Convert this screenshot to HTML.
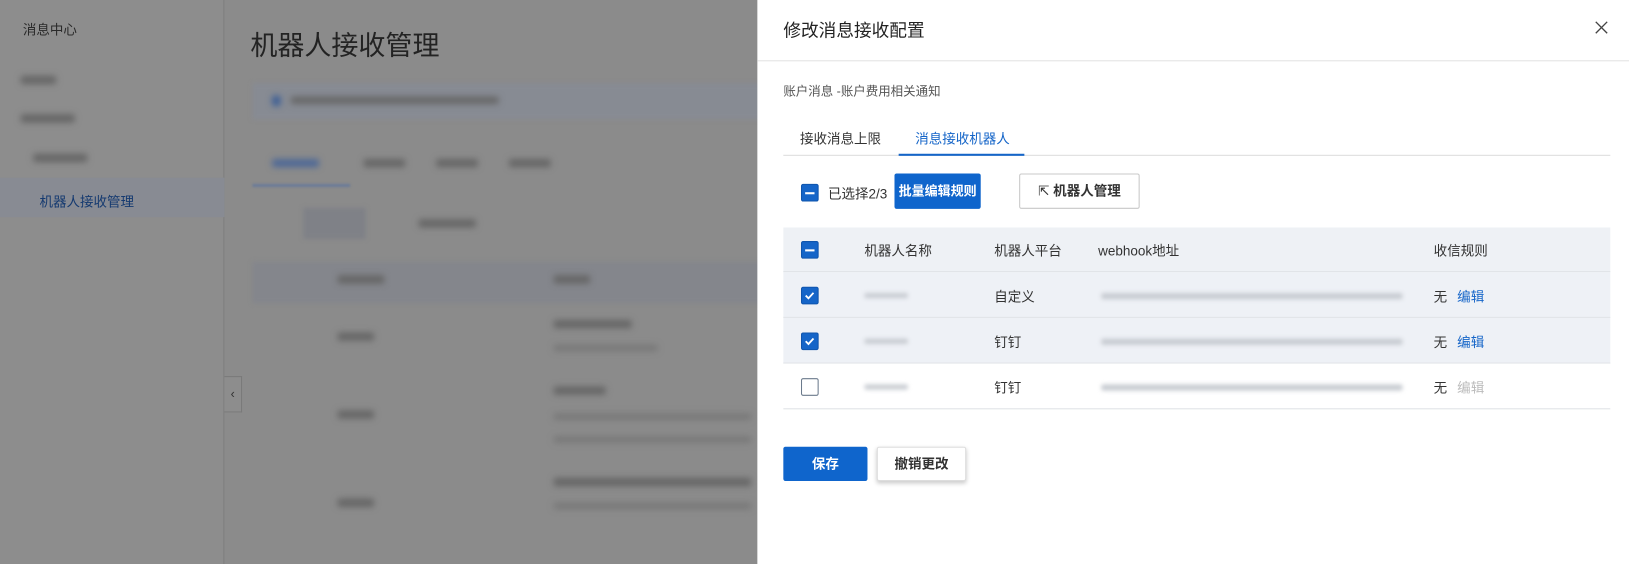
<!DOCTYPE html>
<html><head><meta charset="utf-8"><style>
*{margin:0;padding:0;box-sizing:border-box}
body{width:1629px;height:543px;overflow:hidden;position:relative;background:#8b8b8b;font-family:"Liberation Sans","Noto Sans CJK SC",sans-serif;font-size:12px;color:#333}
#w{position:absolute;left:0;top:0;width:1568px;height:523px;transform:scale(1.0389);transform-origin:0 0}
.a{position:absolute}
.bl{position:absolute;filter:blur(3px);background:#666;border-radius:2px}
.cb{position:absolute;width:17px;height:17px;border-radius:2px;background:#1565c8;border:1px solid #0f55ad}
.cb.e{background:#fff;border:1px solid #6b7a8c}
.dash{position:absolute;left:3px;top:7px;width:9px;height:2px;background:#fff}
.t{position:absolute;font-size:13px;color:#333;white-space:nowrap}
</style></head><body><div id="w">
<div class="a" style="left:0;top:0;width:216px;height:543px;background:#8d8d8d;border-right:1px solid #7e7e7e"></div>
<div class="t" style="left:22px;top:18px;color:#2a2a2a">消息中心</div>
<div class="bl" style="left:20px;top:73px;width:34px;height:8px"></div>
<div class="bl" style="left:20px;top:110px;width:52px;height:8px"></div>
<div class="bl" style="left:32px;top:148px;width:52px;height:8px"></div>
<div class="a" style="left:0;top:171px;width:216px;height:38px;background:#888b93"></div>
<div class="t" style="left:38px;top:184px;color:#153a70">机器人接收管理</div>
<div class="a" style="left:216px;top:362px;width:17px;height:35px;border:1px solid #7a7a7a;border-left:none;background:#8d8d8d;color:#333;font-size:12px;text-align:center;line-height:33px">‹</div>
<div class="a" style="left:241px;top:24px;font-size:26px;color:#232323">机器人接收管理</div>
<div class="a" style="left:243px;top:80px;width:490px;height:35px;background:#878b93;filter:blur(2px)"></div>
<div class="bl" style="left:262px;top:92px;width:8px;height:10px;background:#3c5e95"></div>
<div class="bl" style="left:280px;top:93px;width:200px;height:7px"></div>
<div class="bl" style="left:262px;top:153px;width:45px;height:8px;background:#4e6896"></div>
<div class="a" style="left:243px;top:177px;width:94px;height:3px;background:#6b7b98;filter:blur(1px)"></div>
<div class="bl" style="left:350px;top:153px;width:40px;height:8px"></div>
<div class="bl" style="left:420px;top:153px;width:40px;height:8px"></div>
<div class="bl" style="left:490px;top:153px;width:40px;height:8px"></div>
<div class="a" style="left:292px;top:200px;width:60px;height:30px;background:#7f8187;filter:blur(2px)"></div>
<div class="bl" style="left:403px;top:211px;width:55px;height:8px"></div>
<div class="a" style="left:243px;top:252px;width:490px;height:40px;background:#84868c;filter:blur(2px)"></div>
<div class="bl" style="left:325px;top:265px;width:45px;height:8px"></div>
<div class="bl" style="left:533px;top:265px;width:35px;height:8px"></div>
<div class="bl" style="left:533px;top:308px;width:75px;height:8px"></div>
<div class="bl" style="left:533px;top:332px;width:100px;height:6px;background:#777"></div>
<div class="bl" style="left:325px;top:320px;width:35px;height:8px"></div>
<div class="bl" style="left:533px;top:372px;width:50px;height:8px"></div>
<div class="bl" style="left:533px;top:398px;width:190px;height:6px;background:#777"></div>
<div class="bl" style="left:533px;top:420px;width:190px;height:6px;background:#777"></div>
<div class="bl" style="left:325px;top:395px;width:35px;height:8px"></div>
<div class="bl" style="left:533px;top:460px;width:190px;height:8px"></div>
<div class="bl" style="left:533px;top:484px;width:190px;height:6px;background:#777"></div>
<div class="bl" style="left:325px;top:480px;width:35px;height:8px"></div>
<div class="a" style="left:729px;top:0;width:900px;height:543px;background:#fff"></div>
<div class="a" style="left:754px;top:15px;font-size:17px;color:#222">修改消息接收配置</div>
<svg class="a" style="left:1535px;top:20px" width="13" height="13" viewBox="0 0 13 13"><path d="M1 1L12 12M12 1L1 12" stroke="#444" stroke-width="1.3"/></svg>
<div class="a" style="left:729px;top:58px;width:900px;height:1px;background:#e3e3e3"></div>
<div class="t" style="left:754px;top:79px;font-size:12px;color:#555">账户消息 -账户费用相关通知</div>
<div class="a" style="left:754px;top:149px;width:796px;height:1px;background:#dcdcdc"></div>
<div class="t" style="left:770px;top:123px">接收消息上限</div>
<div class="t" style="left:881px;top:123px;color:#1565c8">消息接收机器人</div>
<div class="a" style="left:865px;top:148px;width:121px;height:2px;background:#1565c8"></div>
<div class="cb" style="left:771px;top:177px"><div class="dash"></div></div>
<div class="t" style="left:797px;top:176px">已选择2/3</div>
<div class="a" style="left:861px;top:167px;width:83px;height:34px;background:#0f65cc;border-radius:2px;color:#fff;font-weight:bold;font-size:12.5px;text-align:center;line-height:34px;white-space:nowrap">批量编辑规则</div>
<div class="a" style="left:981px;top:167px;width:116px;height:34px;border:1px solid #c8c8c8;border-radius:2px;color:#333;font-weight:bold;font-size:13px;text-align:center;line-height:32px;white-space:nowrap"><span style="font-weight:normal">⇱</span> 机器人管理</div>
<div class="a" style="left:754px;top:219px;width:796px;height:43px;background:#eef1f5;border-bottom:1px solid #dfe2e6"></div>
<div class="a" style="left:754px;top:262px;width:796px;height:44px;background:#eef1f6;border-bottom:1px solid #dfe2e6"></div>
<div class="a" style="left:754px;top:306px;width:796px;height:44px;background:#eef1f6;border-bottom:1px solid #dfe2e6"></div>
<div class="a" style="left:754px;top:350px;width:796px;height:44px;background:#fff;border-bottom:1px solid #dfe2e6"></div>
<div class="cb" style="left:771px;top:232px"><div class="dash"></div></div>
<div class="t" style="left:832px;top:231px">机器人名称</div>
<div class="t" style="left:957px;top:231px">机器人平台</div>
<div class="t" style="left:1057px;top:231px">webhook地址</div>
<div class="t" style="left:1380px;top:231px">收信规则</div>
<svg class="cb" style="left:771px;top:276px" viewBox="0 0 17 17"><path d="M4 8.5L7 11.5L12.5 5.5" stroke="#fff" stroke-width="2" fill="none"/></svg>
<svg class="cb" style="left:771px;top:320px" viewBox="0 0 17 17"><path d="M4 8.5L7 11.5L12.5 5.5" stroke="#fff" stroke-width="2" fill="none"/></svg>
<div class="cb e" style="left:771px;top:364px"></div>
<div class="bl" style="left:832px;top:282px;width:42px;height:5px;background:#c8ccd2;filter:blur(2px)"></div>
<div class="bl" style="left:832px;top:326px;width:42px;height:5px;background:#c8ccd2;filter:blur(2px)"></div>
<div class="bl" style="left:832px;top:370px;width:42px;height:5px;background:#c8ccd2;filter:blur(2px)"></div>
<div class="t" style="left:957px;top:275px">自定义</div>
<div class="t" style="left:957px;top:319px">钉钉</div>
<div class="t" style="left:957px;top:363px">钉钉</div>
<div class="bl" style="left:1060px;top:282px;width:290px;height:6px;background:#c8ccd2;filter:blur(2px)"></div>
<div class="bl" style="left:1060px;top:326px;width:290px;height:6px;background:#c8ccd2;filter:blur(2px)"></div>
<div class="bl" style="left:1060px;top:370px;width:290px;height:6px;background:#c8ccd2;filter:blur(2px)"></div>
<div class="t" style="left:1380px;top:275px">无 <span style="color:#1565c8;margin-left:6px">编辑</span></div>
<div class="t" style="left:1380px;top:319px">无 <span style="color:#1565c8;margin-left:6px">编辑</span></div>
<div class="t" style="left:1380px;top:363px">无 <span style="color:#bbb;margin-left:6px">编辑</span></div>
<div class="a" style="left:754px;top:430px;width:81px;height:33px;background:#0f65cc;border-radius:2px;color:#fff;font-weight:bold;font-size:13px;text-align:center;line-height:33px">保存</div>
<div class="a" style="left:844px;top:430px;width:86px;height:33px;background:#fff;border:1px solid #ddd;border-radius:2px;box-shadow:0 2px 4px rgba(0,0,0,.2);color:#333;font-weight:bold;font-size:13px;text-align:center;line-height:31px;white-space:nowrap">撤销更改</div>
</div></body></html>
